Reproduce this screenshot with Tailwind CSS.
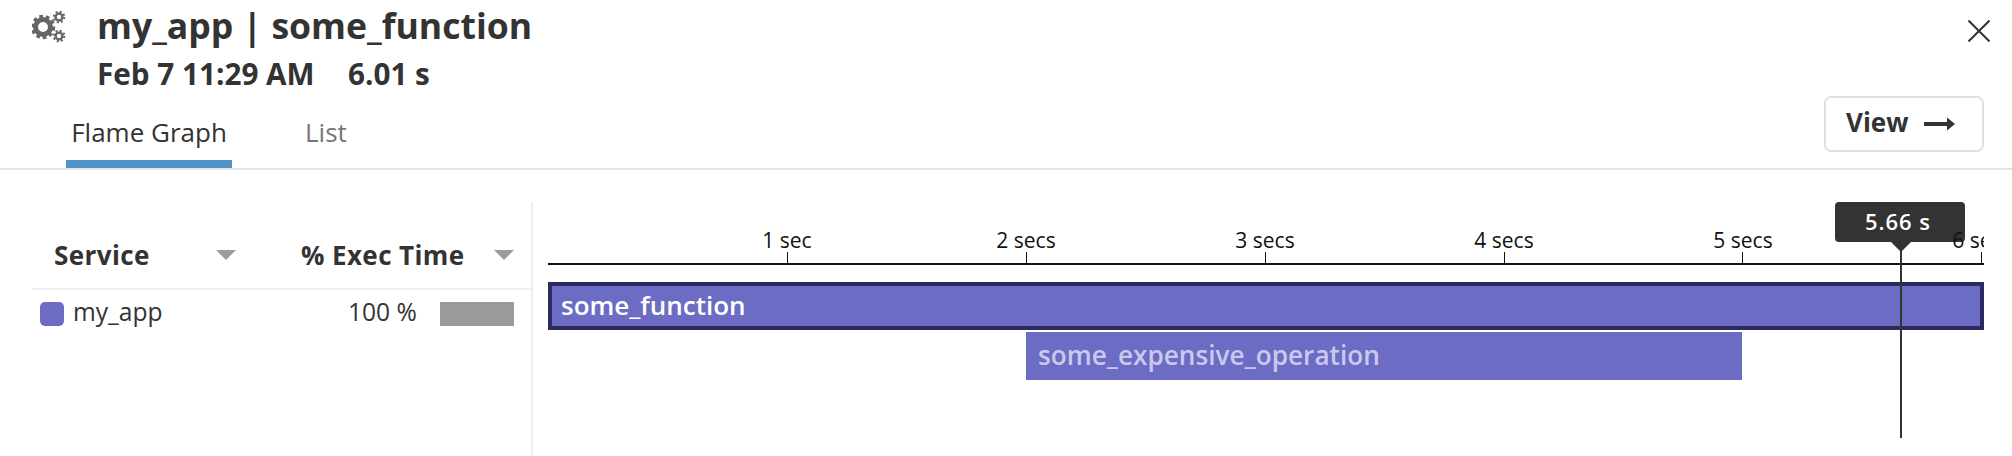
<!DOCTYPE html>
<html lang="en">
<head>
    <meta charset="UTF-8">
    <title>my_app | some_function</title>
    <script src="https://cdn.jsdelivr.net/npm/@tailwindcss/browser@4"></script>
</head>
<body class="bg-white w-[2012px] h-[456px] overflow-hidden font-['Open_Sans',sans-serif] text-[#333]">

<!-- header -->
<div class="h-[170px] border-b-2 border-[#e4e4e4] flex justify-between">
    <div class="flex flex-col h-[168px]">
        <div class="flex pl-[32px] pt-[3px]">
            <svg class="w-[36px] h-[34px] mt-[8px]" viewBox="0 0 36 34" fill="none" stroke="#666">
                <circle cx="11" cy="16" r="7.5" stroke-width="5"/>
                <circle cx="11" cy="16" r="10.5" stroke-width="3.5" stroke-dasharray="3.6 2.9"/>
                <circle cx="27" cy="6" r="3.4" stroke-width="2.4"/>
                <circle cx="27" cy="6" r="5.2" stroke-width="2.2" stroke-dasharray="2 2.08"/>
                <circle cx="27" cy="25" r="3.4" stroke-width="2.4"/>
                <circle cx="27" cy="25" r="5.2" stroke-width="2.2" stroke-dasharray="2 2.08"/>
            </svg>
            <h1 class="ml-[29px] text-[35.6px] leading-[44px] font-bold">my_app | some_function</h1>
        </div>
        <div class="pl-[97px] mt-[9px] flex text-[29.7px] leading-[36px] font-bold">
            <span class="w-[251px]">Feb 7 11:29 AM</span>
            <span>6.01 s</span>
        </div>
        <div class="flex mt-auto pl-[66px] text-[26px] leading-[34px]">
            <div class="w-[166px] h-[53px] border-b-[8px] border-[#4f94c4] text-center">Flame Graph</div>
            <div class="ml-[73px] text-[#777]">List</div>
        </div>
    </div>
    <div class="flex flex-col items-end pt-[20px] pr-[22px]">
        <svg class="w-[22px] h-[22px]" viewBox="0 0 22 22" stroke="#333" stroke-width="2"><path d="M0.5 0.5 21.5 21.5M21.5 0.5 0.5 21.5"/></svg>
        <button class="mt-[54px] mr-[6px] w-[160px] h-[56px] border-2 border-[#e0e0e0] rounded-[7px] flex items-center pl-[20px] pb-[4px] text-[26px] font-bold">
            View
            <svg class="ml-[16px] mt-[4px] w-[32px] h-[14px]" viewBox="0 0 32 14" fill="#333"><path d="M0 5H23V0.5L31 7 23 13.5V9H0Z"/></svg>
        </button>
    </div>
</div>

<div class="flex h-[286px]">
    <!-- service table -->
    <div class="w-[533px] mt-[32px] border-r-2 border-[#eeeeee] pl-[32px]">
        <div class="h-[88px] border-b-2 border-[#eeeeee] flex items-end pb-[15px] text-[26px] leading-[36px] font-bold tracking-[0.4px]">
            <div class="w-[204px] pl-[22px] flex items-center justify-between">
                Service
                <svg class="w-[20px] h-[10px]" viewBox="0 0 20 10" fill="#9b9b9b"><path d="M0 0H20L10 10Z"/></svg>
            </div>
            <div class="w-[278px] flex items-center justify-between">
                <span class="ml-[65px]">% Exec Time</span>
                <svg class="w-[20px] h-[10px]" viewBox="0 0 20 10" fill="#9b9b9b"><path d="M0 0H20L10 10Z"/></svg>
            </div>
        </div>
        <div class="flex items-center mt-[12px] pl-[8px] text-[24.6px] leading-[24px]">
            <div class="w-[24px] h-[24px] rounded-[5px] bg-[#6c6cc4]"></div>
            <span class="ml-[9px] w-[275px] -mt-[4px]">my_app</span>
            <span class="w-[92px] -mt-[4px]">100 %</span>
            <div class="w-[74px] h-[24px] bg-[#9b9b9b]"></div>
        </div>
    </div>

    <!-- flame graph -->
    <div class="relative ml-[15px] w-[1436px] h-full overflow-hidden">
        <div class="absolute left-[1287px] top-[32px] w-[130px] h-[40px] rounded-[4px] bg-[#333] text-white text-center text-[22px] leading-[38px] font-semibold tracking-[1px] pr-[4px]">5.66 s</div>
        <svg class="absolute left-[1343px] top-[72px] w-[20px] h-[10px]" viewBox="0 0 20 10" fill="#333"><path d="M0 0H20L10 10Z"/></svg>

        <div class="absolute left-[179px] top-[58px] w-[120px] text-center text-[21px] leading-[24px] text-[#111]">1 sec</div>
        <div class="absolute left-[418px] top-[58px] w-[120px] text-center text-[21px] leading-[24px] text-[#111]">2 secs</div>
        <div class="absolute left-[657px] top-[58px] w-[120px] text-center text-[21px] leading-[24px] text-[#111]">3 secs</div>
        <div class="absolute left-[896px] top-[58px] w-[120px] text-center text-[21px] leading-[24px] text-[#111]">4 secs</div>
        <div class="absolute left-[1135px] top-[58px] w-[120px] text-center text-[21px] leading-[24px] text-[#111]">5 secs</div>
        <div class="absolute left-[1374px] top-[58px] w-[120px] text-center text-[21px] leading-[24px] text-[#111]">6 secs</div>

        <div class="absolute left-0 top-[93px] w-full h-[2px] bg-[#111]"></div>
        <div class="absolute left-[239px] top-[82px] w-[1px] h-[12px] bg-[#111]"></div>
        <div class="absolute left-[478px] top-[82px] w-[1px] h-[12px] bg-[#111]"></div>
        <div class="absolute left-[717px] top-[82px] w-[1px] h-[12px] bg-[#111]"></div>
        <div class="absolute left-[956px] top-[82px] w-[1px] h-[12px] bg-[#111]"></div>
        <div class="absolute left-[1194px] top-[82px] w-[1px] h-[12px] bg-[#111]"></div>
        <div class="absolute left-[1433px] top-[82px] w-[1px] h-[12px] bg-[#111]"></div>

        <div class="absolute left-0 top-[112px] w-full h-[48px] border-4 border-[#2d2b5e] bg-[#6c6cc4] pl-[9px] text-white text-[26px] leading-[38px] font-semibold">some_function</div>
        <div class="absolute left-[478px] top-[162px] w-[716px] h-[48px] bg-[#6c6cc4] pl-[12px] text-[#c9c9ee] text-[26.2px] leading-[46px] font-semibold">some_expensive_operation</div>

        <div class="absolute left-[1352px] top-[80px] w-[2px] h-[188px] bg-[#333]"></div>
    </div>
</div>
</body>
</html>
